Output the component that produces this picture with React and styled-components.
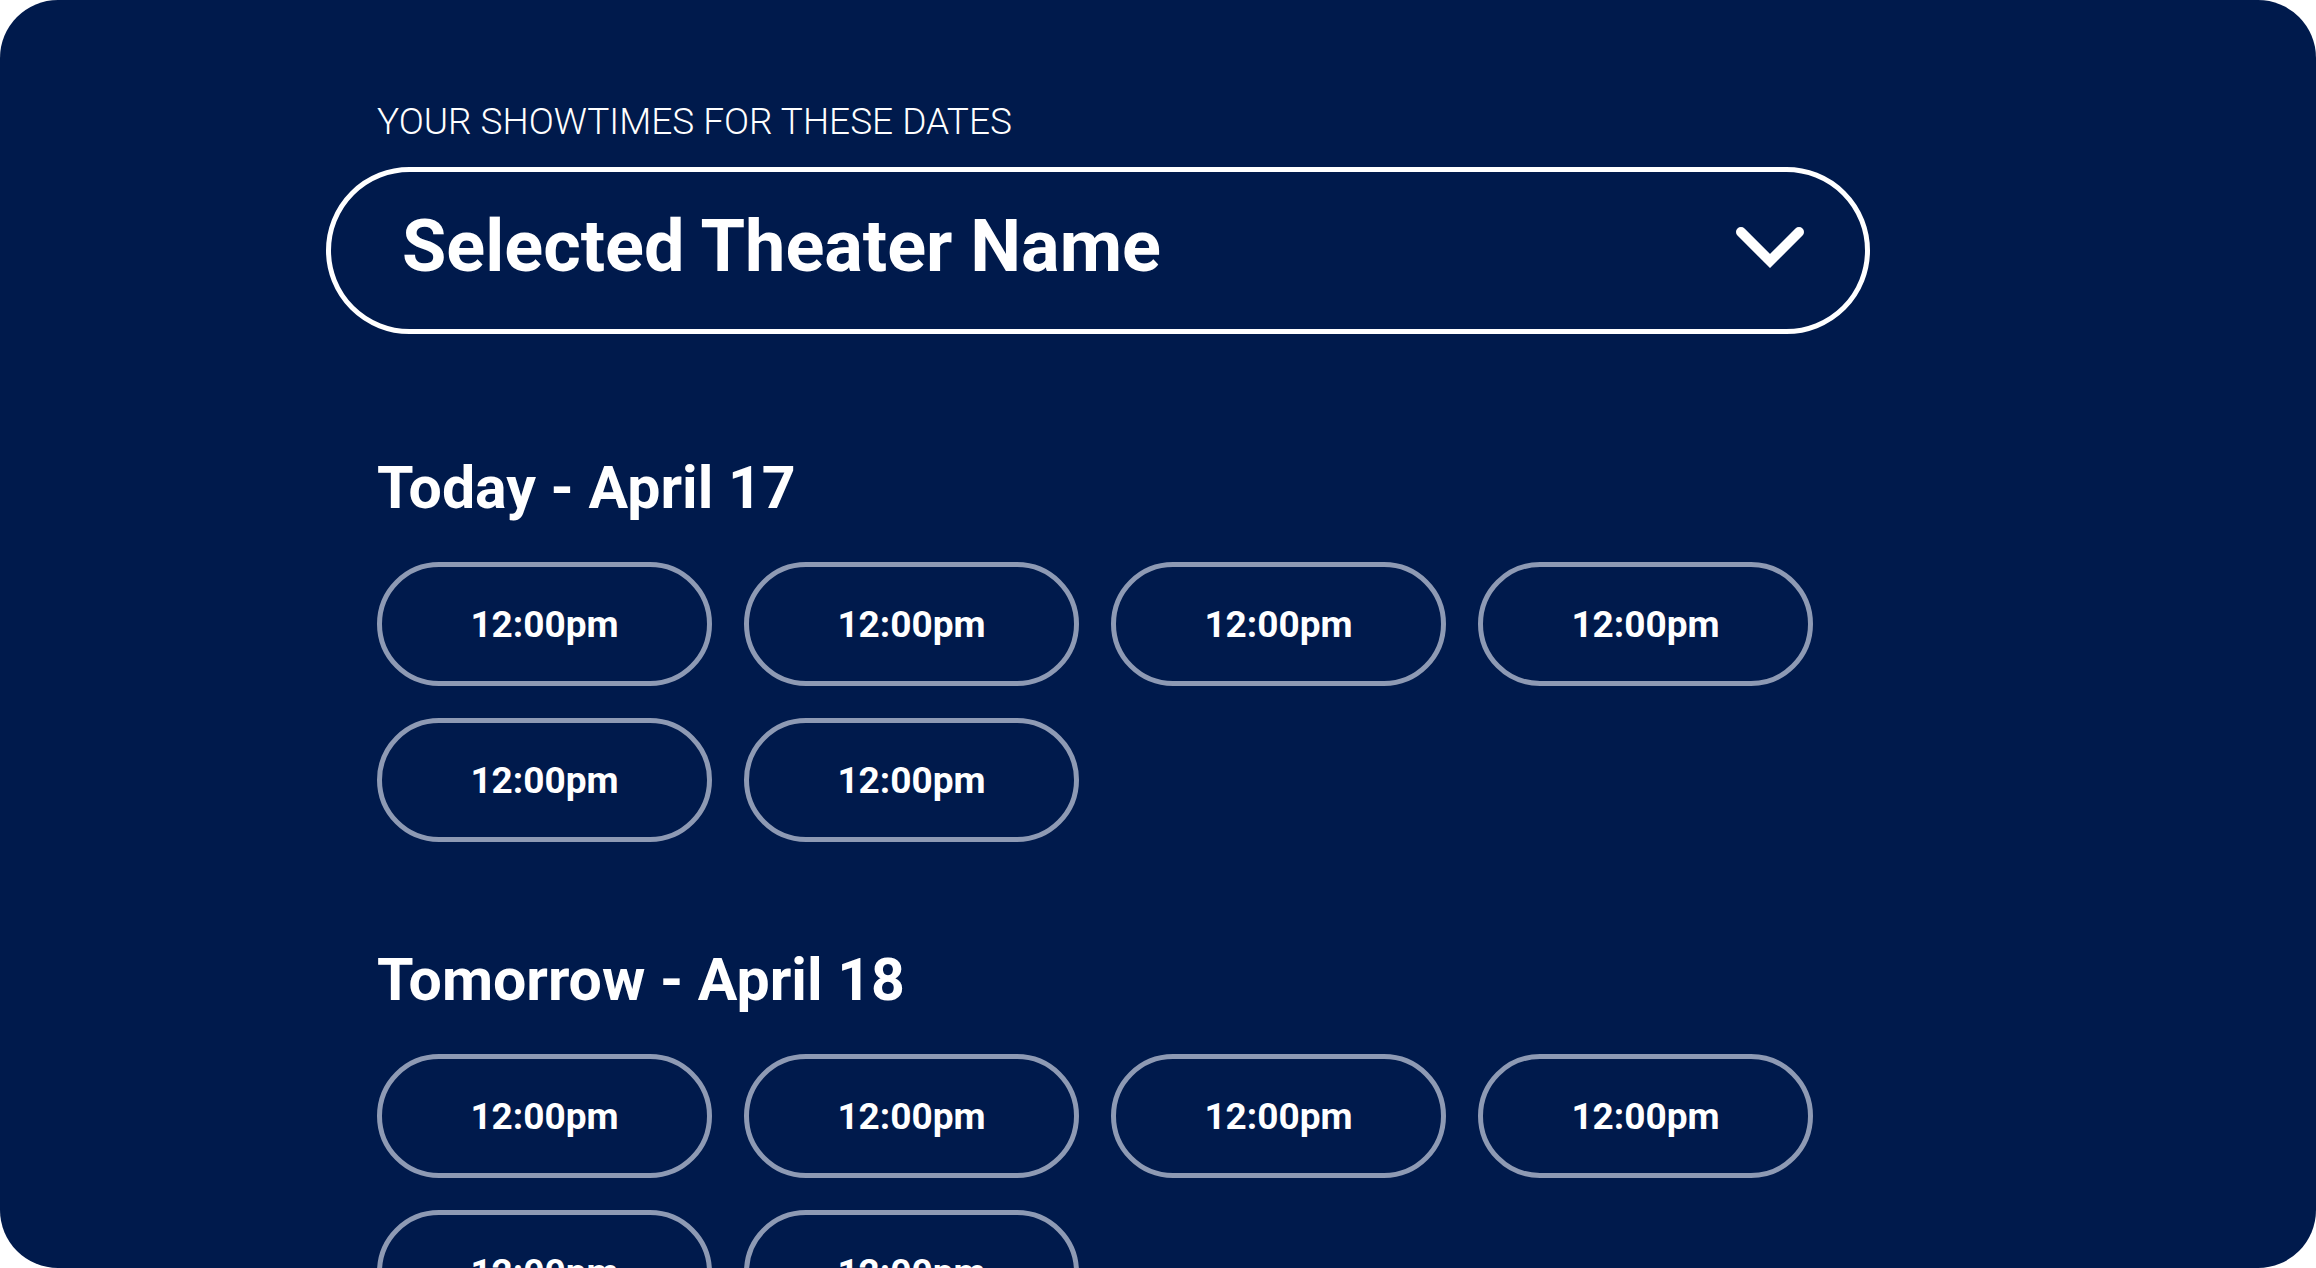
import React from "react";
import styled, { createGlobalStyle } from "styled-components";

const GlobalStyle = createGlobalStyle`
  html, body {
    margin: 0;
    padding: 0;
    background: #ffffff;
  }
  * { box-sizing: border-box; }
`;

const Panel = styled.div`
  width: 2316px;
  height: 1268px;
  background: #001a4c;
  border-radius: 58px;
  overflow: hidden;
  font-family: Roboto, "Liberation Sans", Arial, sans-serif;
  color: #ffffff;
  padding: 103px 0 0 326px;
`;

const Column = styled.div`
  width: 1544px;
  display: flex;
  flex-direction: column;
`;

const Label = styled.div`
  margin-left: 51px;
  font-size: 37px;
  line-height: 1;
  font-weight: 300;
  text-transform: uppercase;
`;

const Select = styled.button`
  margin-top: 27px;
  height: 167px;
  width: 100%;
  border: 5px solid #ffffff;
  border-radius: 84px;
  background: transparent;
  color: #ffffff;
  display: flex;
  align-items: center;
  justify-content: space-between;
  padding: 0 60px 0 71px;
  font-family: inherit;
  cursor: pointer;
`;

const SelectText = styled.span`
  font-size: 72px;
  font-weight: 700;
  line-height: 1;
  margin-top: -8px;
`;

const Chevron = styled.svg`
  width: 70px;
  height: 44px;
  margin-top: -6px;
  flex: none;
`;

const Section = styled.section`
  margin-top: ${(p) => p.$gap}px;
  padding-left: 51px;
  display: flex;
  flex-direction: column;
  gap: 45px;
`;

const DayTitle = styled.h2`
  margin: 0;
  font-size: 59px;
  font-weight: 700;
  line-height: 1;
`;

const TimeGrid = styled.div`
  display: grid;
  grid-template-columns: repeat(4, 335px);
  gap: 32px;
`;

const TimeButton = styled.button`
  height: 124px;
  border: 5px solid #8e9ab4;
  border-radius: 62px;
  background: transparent;
  color: #ffffff;
  font-family: inherit;
  font-size: 37px;
  font-weight: 700;
  line-height: 1;
  display: flex;
  align-items: center;
  justify-content: center;
  cursor: pointer;
`;

const days = [
  { title: "Today - April 17", times: Array(6).fill("12:00pm"), gap: 124 },
  { title: "Tomorrow - April 18", times: Array(6).fill("12:00pm"), gap: 108 },
];

export default function App() {
  return (
    <>
      <GlobalStyle />
      <Panel>
        <Column>
          <Label>Your showtimes for these dates</Label>
          <Select type="button">
            <SelectText>Selected Theater Name</SelectText>
            <Chevron viewBox="0 0 70 44" fill="none">
              <polyline
                points="6,6 35,35 64,6"
                stroke="#ffffff"
                strokeWidth="10"
                strokeLinecap="round"
                strokeLinejoin="miter"
              />
            </Chevron>
          </Select>
          {days.map((d) => (
            <Section key={d.title} $gap={d.gap}>
              <DayTitle>{d.title}</DayTitle>
              <TimeGrid>
                {d.times.map((t, i) => (
                  <TimeButton key={i} type="button">
                    {t}
                  </TimeButton>
                ))}
              </TimeGrid>
            </Section>
          ))}
        </Column>
      </Panel>
    </>
  );
}
